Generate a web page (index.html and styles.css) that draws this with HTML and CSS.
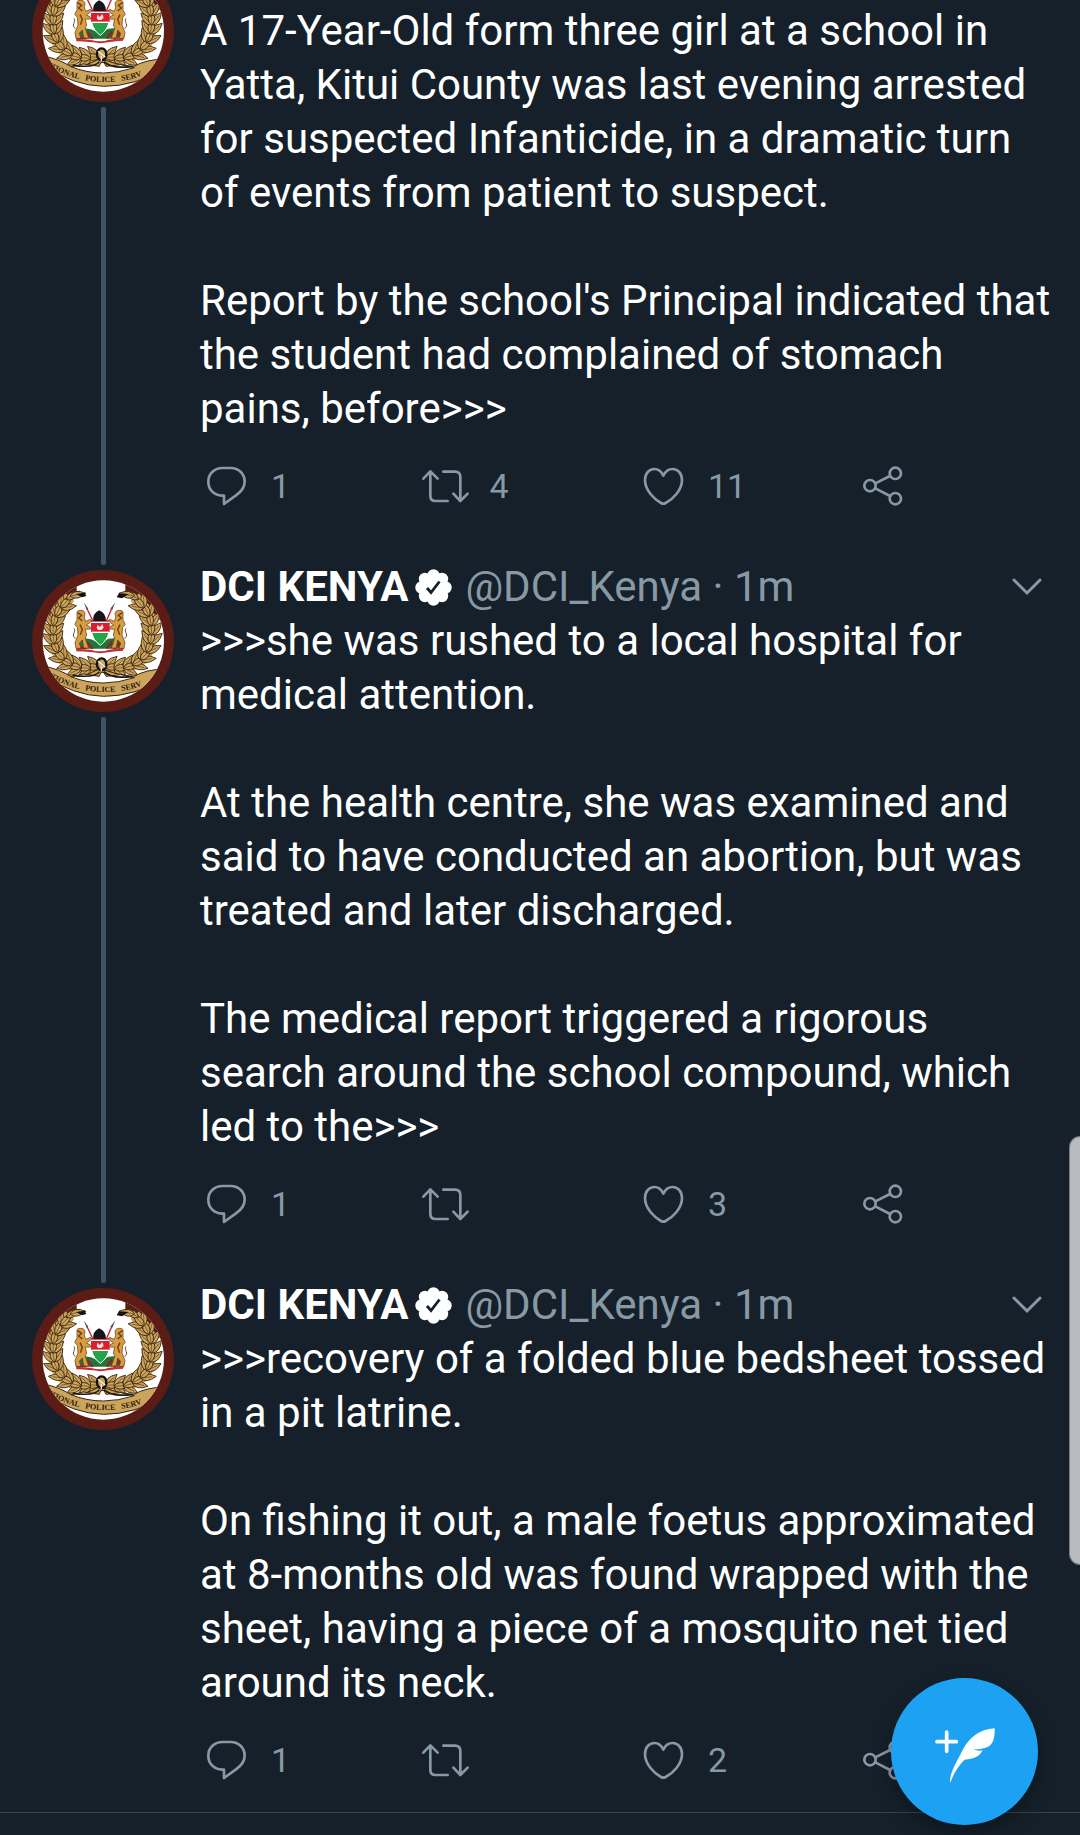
FILE: index.html
```
<!DOCTYPE html>
<html lang="en">
<head>
<meta charset="utf-8">
<meta name="viewport" content="width=device-width, initial-scale=1">
<title>Thread</title>
<link rel="stylesheet" href="styles.css">
</head>
<body>

<!-- shared icons -->
<svg class="sprite" aria-hidden="true">
	<symbol id="reply" viewBox="0 0 150 150">
		<path d="M66 129V104H60C35 103 19 85 19 62C19 38 38 21 62 21H86C111 21 128 39 128 62C128 81 116 93 102 103Z"/>
	</symbol>
	<symbol id="retweet" viewBox="0 0 150 150">
		<path d="M7 53L28 31L50 53M28 33V104Q28 120 44 120H80M67 32H102Q118 32 118 48V119M97 98L118 120L140 98"/>
	</symbol>
	<symbol id="like" viewBox="0 0 150 150">
		<path d="M73 44C66 29 56 24 46 24C30 24 18 38 18 57C18 88 46 115 66 126Q73 130 80 126C101 115 129 88 129 57C129 38 117 24 101 24C90 24 80 29 73 44Z"/>
	</symbol>
	<symbol id="share" viewBox="0 0 150 150">
		<circle cx="36" cy="74" r="17"/><circle cx="112" cy="37" r="17"/><circle cx="112" cy="113" r="17"/>
		<path d="M52 67L96 45M52 82L96 105"/>
	</symbol>
	<symbol id="chevron" viewBox="0 0 30 18">
		<path d="M2 2L15 15L28 2"/>
	</symbol>
	<symbol id="badge" viewBox="0 0 37 37">
		<g fill="#fff">
			<circle cx="18.5" cy="18.5" r="14"/>
			<circle cx="18.5" cy="6.5" r="6.2"/><circle cx="27" cy="10" r="6.2"/><circle cx="30.5" cy="18.5" r="6.2"/><circle cx="27" cy="27" r="6.2"/>
			<circle cx="18.5" cy="30.5" r="6.2"/><circle cx="10" cy="27" r="6.2"/><circle cx="6.5" cy="18.5" r="6.2"/><circle cx="10" cy="10" r="6.2"/>
		</g>
		<path d="M12 19L16 23.500L24.500 12.500" fill="none" stroke="#15202a" stroke-width="2.800"/>
	</symbol>

	<!-- police service crest -->
	<clipPath id="disc"><circle cx="250" cy="243" r="182"/></clipPath>
	<g id="leaf"><path d="M0 0Q16 -20 48 0Q16 20 0 0Z"/><path d="M4 0H36" fill="none" stroke-width="1.500"/></g>
	<g id="sprig">
		<use href="#leaf" transform="rotate(-40)"/><use href="#leaf" transform="rotate(40)"/><use href="#leaf"/>
	</g>
	<g id="branch">
		<path d="M240 325C200 335 155 320 125 296C98 265 92 200 112 155L150 112" fill="none" stroke="#cda45c" stroke-width="34"/>
		<use href="#sprig" transform="translate(238 322) rotate(183)"/>
		<use href="#sprig" transform="translate(212 325) rotate(184)"/>
		<use href="#sprig" transform="translate(184 324) rotate(194)"/>
		<use href="#sprig" transform="translate(157 315) rotate(208)"/>
		<use href="#sprig" transform="translate(133 300) rotate(226)"/>
		<use href="#sprig" transform="translate(114 278) rotate(246)"/>
		<use href="#sprig" transform="translate(103 252) rotate(262)"/>
		<use href="#sprig" transform="translate(99 225) rotate(272)"/>
		<use href="#sprig" transform="translate(100 198) rotate(280)"/>
		<use href="#sprig" transform="translate(107 170) rotate(294)"/>
		<use href="#sprig" transform="translate(122 144) rotate(312)"/>
		<use href="#leaf" transform="translate(138 118) rotate(330)"/>
		<use href="#leaf" transform="translate(150 108) rotate(350)"/>
	</g>
	<g id="lion">
		<path d="M171 164Q168 151 181 151Q194 150 195 162L193 172L197 184L212 178L215 184L199 195L210 200L212 207L196 208L200 225L196 235L206 264H191L187 240L178 250L183 265H168L165 248L174 225L172 202L164 193L171 180Z" fill="#d89c42" stroke="#5b3510" stroke-width="2"/>
		<path d="M173 158L185 166L176 174L187 183M180 194L187 208L181 224" fill="none" stroke="#6b3d12" stroke-width="4"/>
		<path d="M167 235C150 228 170 215 162 205" fill="none" stroke="#7a5120" stroke-width="3"/>
	</g>
	<symbol id="crest" viewBox="36 30 426 426">
		<circle cx="249" cy="243" r="213" fill="#5a1c15"/>
		<circle cx="250" cy="243" r="182" fill="#fff"/>
		<g clip-path="url(#disc)">
			<path d="M60 50H170V100L110 150L60 200ZM316 50H440V200L390 150L316 92Z" fill="#5a1c15"/>
			<g fill="#cda45c" stroke="#38250f" stroke-width="2.500">
				<use href="#branch"/>
				<use href="#branch" transform="translate(494 0) scale(-1 1)"/>
			</g>
			<path d="M168 102L194 98L199 108L186 112ZM326 102L297 100L290 112L306 115Z" fill="#17110b"/>
			<!-- ribbon -->
			<path d="M70 318Q120 328 153 350L205 342L240 326L285 340L340 350Q378 328 430 328V356Q345 409 250 409Q160 407 70 345Z" fill="#cda45c" stroke="#38250f" stroke-width="3"/>
			<path d="M153 350L190 342L238 349L242 338L252 338L258 349L302 344L343 353Q295 369 250 369Q200 369 153 350Z" fill="#fff" stroke="#38250f" stroke-width="3"/>
			<path d="M238 335Q222 355 158 346M252 335Q275 358 337 349" fill="none" stroke="#251709" stroke-width="5"/>
			<ellipse cx="245" cy="313" rx="14" ry="18" fill="#cda45c" stroke="#14100b" stroke-width="7"/>
			<path d="M234 304L256 322M244 319V334" fill="none" stroke="#eee" stroke-width="4"/>
			<path id="motto" d="M84 350Q165 396 257 396Q345 396 425 350" fill="none"/>
			<text class="motto"><textPath href="#motto" startOffset="6">TIONAL&#160;&#160; POLICE&#160;&#160; SERV</textPath></text>
		</g>
		<!-- arms -->
		<path d="M199 142L226 198M277 142L256 190" fill="none" stroke="#c61f2c" stroke-width="4"/>
		<path d="M191 127L205 146L200 149ZM286 127L277 149L271 146Z" fill="#555"/>
		<path d="M167 245L188 234L213 238L240 250L265 236L290 234L310 247V266H168Z" fill="#25733c"/>
		<path d="M169 250L181 264H196L204 250L218 266M260 266L273 248L284 264L297 251L309 269" fill="none" stroke="#8c2522" stroke-width="7"/>
		<use href="#lion"/>
		<use href="#lion" transform="translate(480 0) scale(-1 1)"/>
		<path d="M213 181H269V217H213Z" fill="#d91e30"/>
		<path d="M215 217H267Q261 242 241 256Q220 242 215 217Z" fill="#25a44b" stroke="#fff" stroke-width="3"/>
		<path d="M220 183Q217 161 237 151Q259 160 258 183Z" fill="#15151b"/>
		<path d="M213 187H269M214 217H268" stroke="#fff" stroke-width="4"/>
		<path d="M233 194L239 201L247 192L251 203L244 210H234L230 203Z" fill="#f7d9dc"/>
		<path d="M168 266L211 269Q241 278 267 269L309 264V272Q266 275 240 280Q214 275 169 274Z" fill="#c92c38"/>
	</symbol>
</svg>

<main class="timeline">
	<article class="tweet">
		<div class="side">
			<svg class="avatar" role="img" aria-label="DCI Kenya"><use href="#crest"/></svg>
			<span class="thread"></span>
		</div>
		<div class="content">
			<header class="head">
				<b class="name">DCI KENYA</b>
				<svg class="badge"><use href="#badge"/></svg>
				<span class="meta">@DCI_Kenya · 1m</span>
				<button class="more" aria-label="More"><svg><use href="#chevron"/></svg></button>
			</header>
			<div class="text">
				<p>A 17-Year-Old form three girl at a school in
Yatta, Kitui County was last evening arrested
for suspected Infanticide, in a dramatic turn
of events from patient to suspect.</p>
				<p>Report by the school's Principal indicated that
the student had complained of stomach
pains, before&gt;&gt;&gt;</p>
			</div>
			<div class="actions">
				<button aria-label="Reply"><svg><use href="#reply"/></svg><span>1</span></button>
				<button aria-label="Retweet"><svg><use href="#retweet"/></svg><span>4</span></button>
				<button aria-label="Like"><svg><use href="#like"/></svg><span>11</span></button>
				<button aria-label="Share"><svg><use href="#share"/></svg></button>
			</div>
		</div>
	</article>

	<article class="tweet">
		<div class="side">
			<svg class="avatar" role="img" aria-label="DCI Kenya"><use href="#crest"/></svg>
			<span class="thread"></span>
		</div>
		<div class="content">
			<header class="head">
				<b class="name">DCI KENYA</b>
				<svg class="badge"><use href="#badge"/></svg>
				<span class="meta">@DCI_Kenya · 1m</span>
				<button class="more" aria-label="More"><svg><use href="#chevron"/></svg></button>
			</header>
			<div class="text">
				<p>&gt;&gt;&gt;she was rushed to a local hospital for
medical attention.</p>
				<p>At the health centre, she was examined and
said to have conducted an abortion, but was
treated and later discharged.</p>
				<p>The medical report triggered a rigorous
search around the school compound, which
led to the&gt;&gt;&gt;</p>
			</div>
			<div class="actions">
				<button aria-label="Reply"><svg><use href="#reply"/></svg><span>1</span></button>
				<button aria-label="Retweet"><svg><use href="#retweet"/></svg></button>
				<button aria-label="Like"><svg><use href="#like"/></svg><span>3</span></button>
				<button aria-label="Share"><svg><use href="#share"/></svg></button>
			</div>
		</div>
	</article>

	<article class="tweet last">
		<div class="side">
			<svg class="avatar" role="img" aria-label="DCI Kenya"><use href="#crest"/></svg>
		</div>
		<div class="content">
			<header class="head">
				<b class="name">DCI KENYA</b>
				<svg class="badge"><use href="#badge"/></svg>
				<span class="meta">@DCI_Kenya · 1m</span>
				<button class="more" aria-label="More"><svg><use href="#chevron"/></svg></button>
			</header>
			<div class="text">
				<p>&gt;&gt;&gt;recovery of a folded blue bedsheet tossed
in a pit latrine.</p>
				<p>On fishing it out, a male foetus approximated
at 8-months old was found wrapped with the
sheet, having a piece of a mosquito net tied
around its neck.</p>
			</div>
			<div class="actions">
				<button aria-label="Reply"><svg><use href="#reply"/></svg><span>1</span></button>
				<button aria-label="Retweet"><svg><use href="#retweet"/></svg></button>
				<button aria-label="Like"><svg><use href="#like"/></svg><span>2</span></button>
				<button aria-label="Share"><svg><use href="#share"/></svg></button>
			</div>
		</div>
	</article>
</main>

<button class="compose" aria-label="New Tweet">
	<svg viewBox="0 0 441 441">
		<path d="M167 162V220M138 191H196" fill="none" stroke="#fff" stroke-width="11" stroke-linecap="round"/>
		<path d="M311 151C265 154 235 179 216 214C202 244 176 282 177 312H179C187 289 200 265 221 245C249 244 266 235 275 217C266 219 257 219 249 214C266 213 283 212 296 203C309 194 312 170 311 151Z" fill="#fff"/>
	</svg>
</button>
<div class="edge-handle"></div>

</body>
</html>
```
FILE: styles.css
```
*{box-sizing:border-box;}
html{background:#15202a;}
body{margin:0;overflow:hidden;background:#15202a;color:#fff;font-family:Roboto,"Liberation Sans",sans-serif;font-size:42px;line-height:54px;}
button{margin:0;padding:0;border:0;background:none;color:inherit;font:inherit;cursor:pointer;}
p{margin:0 0 54px;white-space:pre-line;}
p:last-child{margin-bottom:0;}
svg{display:block;}
.sprite{position:absolute;width:0;height:0;}

/* thread is scrolled part way into the first tweet */
.timeline{margin-top:-50px;}
.tweet{display:flex;padding:0 8px 0 32px;}
.tweet.last{border-bottom:1px solid #38444d;}
.side{flex:none;display:flex;flex-direction:column;align-items:center;width:142px;margin-right:26px;padding-top:10px;}
.avatar{flex:none;width:142px;height:142px;}
.thread{flex:1;width:5px;margin:5px 0 -5px;border-radius:2px;background:#3d5466;}
.content{flex:1;min-width:0;padding-bottom:24px;}
.last .content{padding-bottom:2px;}

.head{display:flex;align-items:center;padding-right:30px;}
.name{font-weight:700;}
.badge{width:37px;height:37px;margin:0 13px 0 7px;}
.meta{color:#8899a6;}
.more{margin-left:auto;}
.more svg{width:30px;height:18px;fill:none;stroke:#8899a6;stroke-width:3;stroke-linecap:round;}

.actions{display:grid;grid-template-columns:repeat(4,1fr);height:100px;margin:0 -4px 0 2px;color:#8899a6;font-size:34px;}
.actions button{display:flex;align-items:center;gap:19px;}
.actions svg{width:50px;height:50px;fill:none;stroke:#8899a6;stroke-width:8;stroke-linecap:round;stroke-linejoin:round;}

.motto{font-family:"Liberation Serif",serif;font-size:24px;font-weight:700;fill:#2a190b;}

.compose{position:fixed;right:42px;bottom:10px;width:147px;height:147px;border-radius:50%;background:#1da1f2;box-shadow:0 8px 20px rgba(0,0,0,.3);}
.compose svg{width:100%;height:100%;}
.edge-handle{position:fixed;right:0;top:1136px;width:11px;height:429px;border:1px solid #77777d;border-right:0;border-radius:12px 0 0 12px;background:#b8bcc0;}
```
